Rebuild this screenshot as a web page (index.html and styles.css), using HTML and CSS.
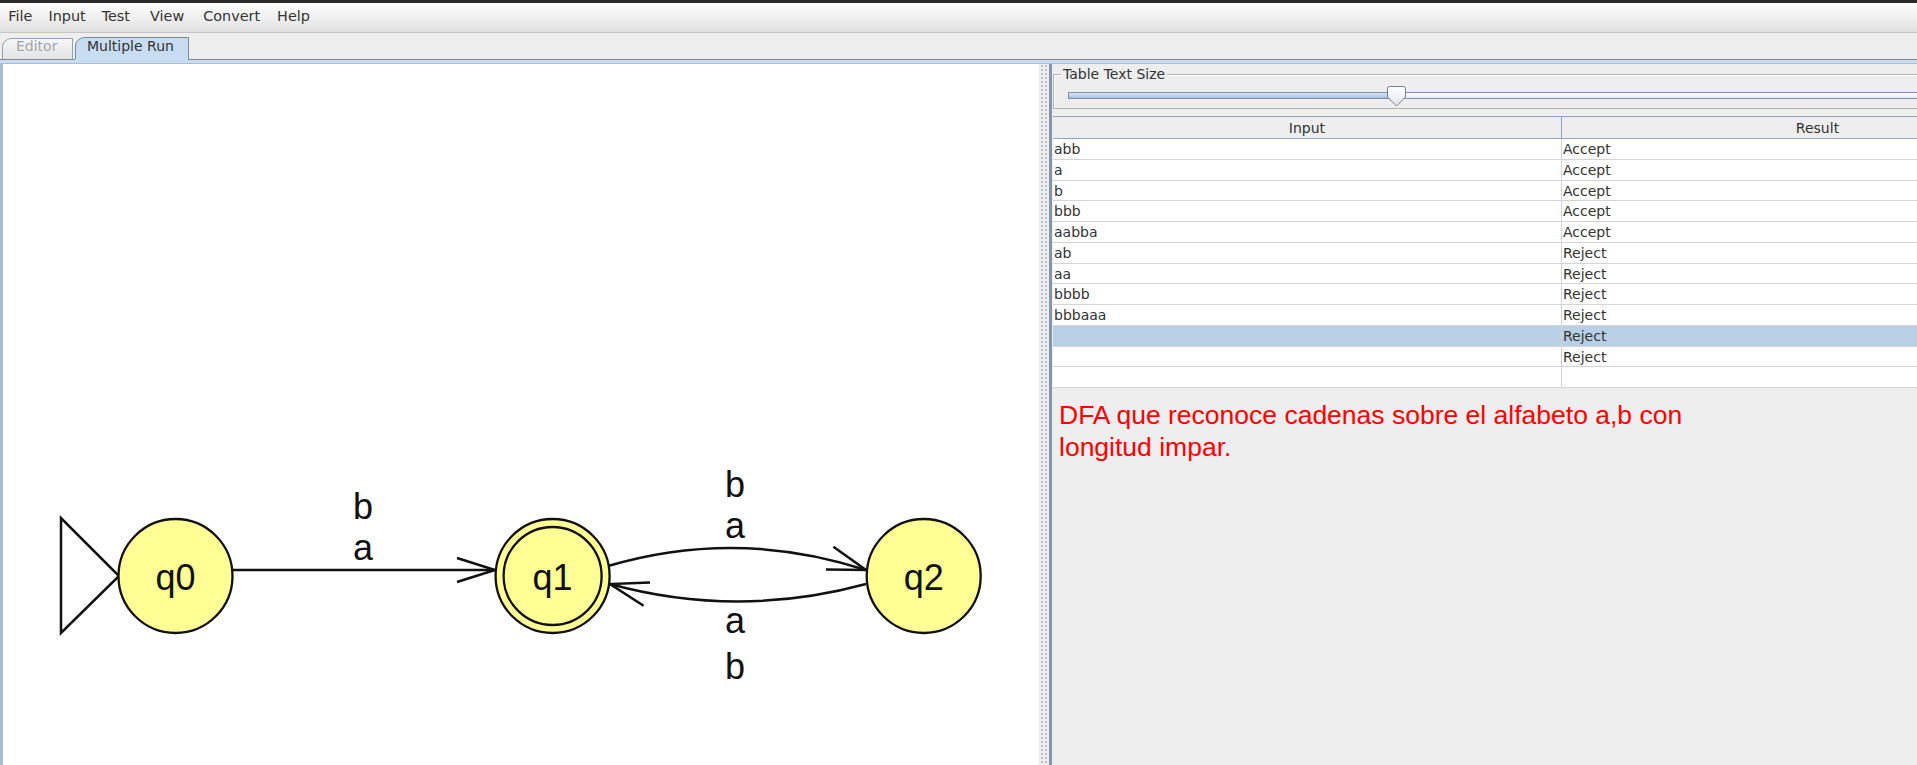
FILE: index.html
```html
<!DOCTYPE html>
<html>
<head>
<meta charset="utf-8">
<title>JFLAP - Multiple Run</title>
<link rel="stylesheet" href="styles.css">
</head>
<body>
<div class="topstrip"></div>
<div class="menubar">
  <span class="menu">File</span>
  <span class="menu">Input</span>
  <span class="menu">Test</span>
  <span class="menu menu-view">View</span>
  <span class="menu menu-convert">Convert</span>
  <span class="menu menu-help">Help</span>
</div>
<div class="tabstrip">
  <div class="tab tab-off">Editor</div>
  <div class="tab tab-on">Multiple Run</div>
</div>
<div class="tabband"></div>
<div class="content">
  <div class="editor">
    <svg class="diagram" viewBox="3 64 1036 701" width="1036" height="701" xmlns="http://www.w3.org/2000/svg">
      <polygon class="edge" points="61,518 61,633 119,576"/>
      <line class="edge" x1="232" y1="570" x2="495" y2="570"/>
      <polyline class="edge" points="457,558 495,570 457,582"/>
      <path class="edge" d="M608,566 Q737,528 866,570"/>
      <polyline class="edge" points="833.4,546.8 866,570 826,569.6"/>
      <path class="edge" d="M866,584 Q737,619 610,584"/>
      <polyline class="edge" points="650,582.5 610,584 643.6,605.7"/>
      <circle class="state" cx="175.5" cy="576" r="57"/>
      <circle class="state" cx="552.6" cy="576" r="57"/>
      <circle class="ring" cx="552.6" cy="576" r="49"/>
      <circle class="state" cx="923.7" cy="576" r="57"/>
      <text class="lbl" x="175.5" y="590">q0</text>
      <text class="lbl" x="552.6" y="590">q1</text>
      <text class="lbl" x="923.7" y="590">q2</text>
      <text class="lbl" x="363" y="519">b</text>
      <text class="lbl" x="363" y="560">a</text>
      <text class="lbl" x="735" y="497">b</text>
      <text class="lbl" x="735" y="538">a</text>
      <text class="lbl" x="735" y="633">a</text>
      <text class="lbl" x="735" y="679">b</text>
    </svg>
  </div>
  <div class="splitter"></div>
  <div class="side">
    <div class="side-inner">
      <div class="sizebox">
        <span class="sizebox-title">Table Text Size</span>
        <div class="slider">
          <div class="track"><div class="fill"></div></div>
          <svg class="thumb" width="19" height="21" viewBox="0 0 19 21" xmlns="http://www.w3.org/2000/svg">
            <defs>
              <linearGradient id="tg" x1="0" y1="0" x2="0" y2="1">
                <stop offset="0" stop-color="#ffffff"/>
                <stop offset="1" stop-color="#dfe6ef"/>
              </linearGradient>
            </defs>
            <path d="M2.5,0.5 H16.5 Q18.5,0.5 18.5,2.5 V11 L9.5,20 L0.5,11 V2.5 Q0.5,0.5 2.5,0.5 Z" fill="url(#tg)" stroke="#6f7f96"/>
          </svg>
        </div>
      </div>
      <div class="table">
        <div class="thead"><div class="th">Input</div><div class="th">Result</div></div>
        <div class="row"><div class="cell">abb</div><div class="cell">Accept</div></div>
        <div class="row"><div class="cell">a</div><div class="cell">Accept</div></div>
        <div class="row"><div class="cell">b</div><div class="cell">Accept</div></div>
        <div class="row"><div class="cell">bbb</div><div class="cell">Accept</div></div>
        <div class="row"><div class="cell">aabba</div><div class="cell">Accept</div></div>
        <div class="row"><div class="cell">ab</div><div class="cell">Reject</div></div>
        <div class="row"><div class="cell">aa</div><div class="cell">Reject</div></div>
        <div class="row"><div class="cell">bbbb</div><div class="cell">Reject</div></div>
        <div class="row"><div class="cell">bbbaaa</div><div class="cell">Reject</div></div>
        <div class="row row-sel"><div class="cell"></div><div class="cell">Reject</div></div>
        <div class="row"><div class="cell"></div><div class="cell">Reject</div></div>
        <div class="row"><div class="cell"></div><div class="cell"></div></div>
      </div>
      <div class="note">DFA que reconoce cadenas sobre el alfabeto a,b con<br>longitud impar.</div>
    </div>
  </div>
</div>
</body>
</html>
```

FILE: styles.css
```css
html, body {
  margin: 0;
  padding: 0;
}
body {
  width: 1917px;
  height: 765px;
  overflow: hidden;
  background: #eeeeee;
  font-family: "DejaVu Sans", sans-serif;
  font-size: 14px;
  color: #333333;
}

.topstrip {
  height: 3px;
  background: #2b2b2b;
}

.menubar {
  height: 30px;
  box-sizing: border-box;
  display: flex;
  padding-left: 0.3px;
  background: linear-gradient(#ffffff, #e0e0e0);
  border-bottom: 1px solid #c6c6c6;
}
.menu {
  padding: 0 8px;
  line-height: 26px;
  font-size: 14.4px;
  color: #333333;
}
.menu-view {
  margin-left: 4px;
}
.menu-convert {
  margin-left: 3px;
}
.menu-help {
  margin-left: 1px;
}

.tabstrip {
  height: 26px;
  display: flex;
  align-items: flex-end;
  gap: 2px;
  padding-left: 2px;
}
.tab {
  box-sizing: border-box;
  border: 1px solid #8ea3bd;
  border-bottom: none;
  border-top-left-radius: 10px 9px;
  line-height: 14px;
  white-space: nowrap;
}
.tab-off {
  height: 21px;
  width: 71px;
  padding-left: 13px;
  color: #a2a6ac;
  background: linear-gradient(#f6f6f6, #e4e4e4);
}
.tab-on {
  height: 22px;
  width: 114px;
  padding: 1px 0 0 11px;
  background: #c8ddf2;
  border-color: #7a8a99;
  color: #333333;
}

.tabband {
  height: 5px;
  box-sizing: border-box;
  background:
    linear-gradient(to right, #7a8a99 0 75px, transparent 75px 188px, #7a8a99 188px) top / 100% 1px no-repeat,
    #c8ddf2;
  border-bottom: 1px solid #aabdd3;
}

.content {
  display: flex;
  height: 701px;
}

.editor {
  position: relative;
  width: 1036px;
  flex: none;
  border-left: 3px solid #a9bbd1;
  background: #ffffff;
}
.diagram {
  position: absolute;
  left: 0;
  top: 0;
}
.edge {
  fill: none;
  stroke: #111111;
  stroke-width: 2.5;
}
.state {
  fill: #ffff96;
  stroke: #111111;
  stroke-width: 2.3;
}
.ring {
  fill: none;
  stroke: #111111;
  stroke-width: 2.3;
}
.lbl {
  font-family: "Liberation Sans", Arial, sans-serif;
  font-size: 36px;
  fill: #111111;
  text-anchor: middle;
}

.splitter {
  width: 10px;
  flex: none;
  background-color: #eeeeee;
  background-image: radial-gradient(circle, #b9c1cc 0.9px, transparent 1.3px);
  background-size: 4px 4px;
  background-position: 1px 0;
}

.side {
  flex: 1;
  min-width: 0;
  overflow: hidden;
  border-left: 3px solid #8495aa;
}
.side-inner {
  width: 1021px;
}

.sizebox {
  position: relative;
  margin: 10px 0 0 1px;
  height: 35px;
  box-sizing: border-box;
  border: 1px solid #b3b3b3;
  box-shadow: inset 1px 1px 0 #ffffff;
  padding: 11px 0 0 14px;
}
.sizebox-title {
  position: absolute;
  left: 7px;
  top: -9px;
  padding: 0 2px;
  background: #eeeeee;
  font-size: 14px;
  line-height: 16px;
  color: #333333;
}
.slider {
  position: relative;
  height: 21px;
}
.track {
  position: relative;
  top: 6px;
  height: 7px;
  box-sizing: border-box;
  border: 1px solid #7e90b0;
  background: linear-gradient(#ffffff, #e8ebf0);
}
.fill {
  width: 329px;
  height: 100%;
  background: linear-gradient(#dce7f5, #a8c0e2);
}
.thumb {
  position: absolute;
  left: 319px;
  top: 0;
}

.table {
  margin: 7px 0 0 1px;
  width: 1020px;
}
.thead {
  display: grid;
  grid-template-columns: 508px 512px;
  height: 23px;
  box-sizing: border-box;
  border-top: 1px solid #8fa5c0;
  border-bottom: 1px solid #8fa5c0;
  background: #eeeeee;
}
.th {
  text-align: center;
  line-height: 22px;
  font-size: 14px;
}
.th + .th {
  border-left: 1px solid #8fa5c0;
}
.row {
  display: grid;
  grid-template-columns: 508px 512px;
  height: 20.75px;
  box-sizing: border-box;
  border-bottom: 1px solid #d4d4d4;
  background: #ffffff;
}
.row-sel {
  background: #b8cfe5;
}
.cell {
  padding: 2px 0 0 1px;
  line-height: 17px;
  font-size: 14px;
  white-space: nowrap;
}
.cell + .cell {
  border-left: 1px solid #d4d4d4;
}

.note {
  margin: 11px 0 0 7px;
  color: #ff0000;
  font-family: "Liberation Sans", Arial, sans-serif;
  font-size: 26.5px;
  line-height: 32px;
  white-space: nowrap;
}
```
